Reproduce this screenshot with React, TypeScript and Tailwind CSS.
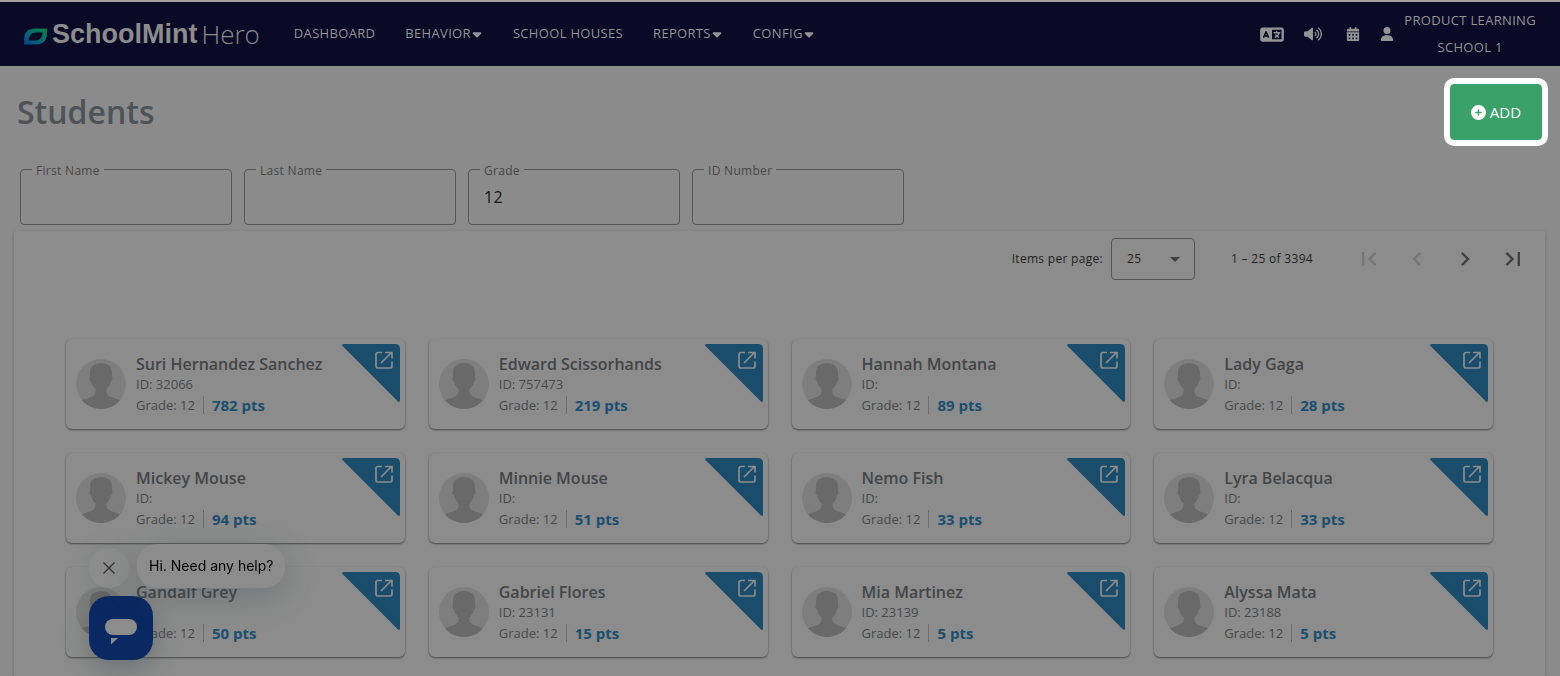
import React, { useState } from "react";
import {
  FaCalendarDays,
  FaCaretDown,
  FaCirclePlus,
  FaLanguage,
  FaUser,
  FaVolumeHigh,
} from "react-icons/fa6";
import { MdArrowDropDown, MdChevronLeft, MdChevronRight, MdFirstPage, MdLastPage } from "react-icons/md";

type Student = { name: string; id: string; grade: number; points: number };

const students: Student[] = [
  { name: "Suri Hernandez Sanchez", id: "32066", grade: 12, points: 782 },
  { name: "Edward Scissorhands", id: "757473", grade: 12, points: 219 },
  { name: "Hannah Montana", id: "", grade: 12, points: 89 },
  { name: "Lady Gaga", id: "", grade: 12, points: 28 },
  { name: "Mickey Mouse", id: "", grade: 12, points: 94 },
  { name: "Minnie Mouse", id: "", grade: 12, points: 51 },
  { name: "Nemo Fish", id: "", grade: 12, points: 33 },
  { name: "Lyra Belacqua", id: "", grade: 12, points: 33 },
  { name: "Gandalf Grey", id: "", grade: 12, points: 50 },
  { name: "Gabriel Flores", id: "23131", grade: 12, points: 15 },
  { name: "Mia Martinez", id: "23139", grade: 12, points: 5 },
  { name: "Alyssa Mata", id: "23188", grade: 12, points: 5 },
];

const navItems = [
  { label: "DASHBOARD", menu: false },
  { label: "BEHAVIOR", menu: true },
  { label: "SCHOOL HOUSES", menu: false },
  { label: "REPORTS", menu: true },
  { label: "CONFIG", menu: true },
];

const Logo = () => (
  <a href="#" className="flex items-center tracking-normal text-[#8c8c8c]">
    <svg width="24" height="17" viewBox="0 0 24 17" className="mr-1 mt-1">
      <defs>
        <linearGradient id="leaf" x1="0" y1="1" x2="1" y2="0">
          <stop offset="0" stopColor="#06418a" />
          <stop offset="0.5" stopColor="#05696f" />
          <stop offset="1" stopColor="#07803f" />
        </linearGradient>
      </defs>
      <path
        fill="url(#leaf)"
        fillRule="evenodd"
        d="M0 16.500V11C0 4.500 4.500 0.500 10.500 0.500H23V6C23 12.500 18.500 16.500 12.500 16.500ZM4.500 12.500H11.500C16 12.500 18 9.500 18.500 4.500H12C7.500 4.500 5 7.500 4.500 12.500Z"
      />
    </svg>
    <span className="font-['Liberation_Sans',sans-serif] text-[27px] font-bold leading-8">SchoolMint</span>
    <span className="ml-1 text-[26px] font-light leading-8">Hero</span>
  </a>
);

const Header = () => (
  <header className="flex min-h-[66px] items-center border-t-2 border-[#a5a19d] bg-[#0a0926] px-6 text-[13px] font-medium tracking-wide text-[#949494]">
    <Logo />
    <nav className="ml-[34px] flex flex-1 items-center gap-[30px]">
      {navItems.map((item) => (
        <a key={item.label} href="#" className="flex items-center">
          {item.label}
          {item.menu && <FaCaretDown className="h-[14px] w-3" />}
        </a>
      ))}
    </nav>
    <div className="flex items-center">
      <button aria-label="Language" className="mr-5"><FaLanguage className="h-[19px] w-6" /></button>
      <button aria-label="Announcements" className="mr-6"><FaVolumeHigh className="h-4 w-[18px]" /></button>
      <button aria-label="Calendar" className="mr-5"><FaCalendarDays className="h-[14px] w-[14px]" /></button>
      <a href="#" className="flex items-center gap-[10px]">
        <FaUser className="h-[14px] w-[14px]" />
        <span className="text-center leading-[27px]">
          PRODUCT LEARNING
          <br />
          SCHOOL 1
        </span>
      </a>
    </div>
  </header>
);

const FilterField = ({ id, label, initial = "" }: { id: string; label: string; initial?: string }) => {
  const [value, setValue] = useState(initial);
  return (
    <div className="relative w-[212px]">
      <input
        id={id}
        type="text"
        value={value}
        onChange={(e) => setValue(e.target.value)}
        className="h-14 w-full rounded border border-[#555] bg-transparent px-[15px] text-base tracking-wide text-[#141414] outline-none"
      />
      <label htmlFor={id} className="absolute -top-2 left-3 bg-[#8b8b8b] px-1 text-xs leading-5 tracking-wide text-[#474747]">
        {label}
      </label>
    </div>
  );
};

const Paginator = () => {
  const [pageSize, setPageSize] = useState("25");
  return (
    <div className="flex h-14 items-center justify-end pr-[18px] text-xs tracking-wide text-[#1f1f1f]">
      <label htmlFor="page-size">Items per page:</label>
      <div className="relative ml-2">
        <select
          id="page-size"
          value={pageSize}
          onChange={(e) => setPageSize(e.target.value)}
          className="h-[42px] w-[84px] appearance-none rounded border border-[#555] bg-transparent px-[15px] tracking-wide outline-none"
        >
          <option>25</option>
          <option>50</option>
          <option>100</option>
        </select>
        <MdArrowDropDown size={24} className="pointer-events-none absolute right-2 top-[9px] text-[#404040]" />
      </div>
      <span className="ml-9 mr-[42px]">1 – 25 of 3394</span>
      <div className="flex items-center gap-5 text-[#404040]">
        <button aria-label="First page" disabled className="text-[#757575]"><MdFirstPage size={28} /></button>
        <button aria-label="Previous page" disabled className="text-[#757575]"><MdChevronLeft size={28} /></button>
        <button aria-label="Next page"><MdChevronRight size={28} /></button>
        <button aria-label="Last page"><MdLastPage size={28} /></button>
      </div>
    </div>
  );
};

const Avatar = () => (
  <svg width="50" height="50" viewBox="0 0 50 50" className="shrink-0 rounded-full">
    <rect width="50" height="50" fill="#7e7e7e" />
    <path
      fill="#696969"
      d="M25 4C31.500 4 36 7.500 36 13.500V18C37 19 36.500 22 35 22.500C34.500 26 32 28.500 30.500 30.500C29.500 34.500 32 37 36 38.500C39.500 39.500 42 40 45 42V50H5V42C8 40 10.500 39.500 14 38.500C18 37 20.500 34.500 19.500 30.500C18 28.500 15.500 26 15 22.500C13.500 22 13 19 14 18V13.500C14 7.500 18.500 4 25 4Z"
    />
  </svg>
);

const StudentCard = ({ student }: { student: Student }) => (
  <article className="relative flex h-[90px] items-center rounded-md bg-[#8c8c8c] pl-[10px] text-[#46484a] shadow-[0_1px_2px_rgba(0,0,0,0.5)]">
    <Avatar />
    <div className="ml-[10px] pt-[2px] text-[13px]">
      <h2 className="text-base font-semibold leading-5 text-[#434547]">{student.name}</h2>
      <p className="leading-5">ID: {student.id}</p>
      <p className="flex items-center leading-[22px]">
        Grade: {student.grade}
        <span className="mx-2 h-[18px] w-px bg-[#6c6c6c]" />
        <strong className="text-[15px] font-bold leading-[22px] text-[#1a4f70]">{student.points} pts</strong>
      </p>
    </div>
    <a href="#" aria-label={`Open ${student.name}`} className="absolute right-[5px] top-[5px]">
      <svg width="58" height="58" viewBox="0 0 58 58">
        <path fill="#194d6b" d="M1.500 0H53Q58 0 58 5V56.500Q57.500 59 55.500 57L0.500 2Q-0.500 0 1.500 0Z" />
        <path
          fill="none"
          stroke="#8c8c8c"
          strokeWidth="1.700"
          d="M40 8.500H36Q34 8.500 34 10.500V22Q34 24 36 24H48Q50 24 50 22V17.500M39 19L49.500 8.500M43 8.500H50V14.500"
        />
      </svg>
    </a>
  </article>
);

const ChatWidget = () => (
  <aside className="fixed bottom-4 left-[89px] font-['Inter',sans-serif]">
    <div className="mb-2 flex items-end gap-2">
      <button
        aria-label="Close chat"
        className="flex h-10 w-10 items-center justify-center rounded-full bg-[#8c8c8c] shadow-[0_4px_24px_rgba(60,75,75,0.2)]"
      >
        <svg width="12" height="12" viewBox="0 0 12 12" stroke="#303030" strokeWidth="1.200">
          <path d="M0.500 0.500L11.500 11.500M11.500 0.500L0.500 11.500" />
        </svg>
      </button>
      <p className="flex h-11 items-center rounded-[20px] bg-[#8c8c8c] px-3 text-sm text-black shadow-[0_8px_32px_rgba(50,70,70,0.3)]">
        Hi. Need any help?
      </p>
    </div>
    <button
      aria-label="Open chat"
      className="flex h-16 w-16 items-center justify-center rounded-[20px] bg-[#0a2963] pt-2 shadow-[0_8px_24px_rgba(50,70,70,0.35)]"
    >
      <svg width="32" height="26" viewBox="0 0 32 26" fill="#8c8c8c">
        <rect width="32" height="16" rx="8" />
        <path d="M6 19H13L6 25.500Z" />
      </svg>
    </button>
  </aside>
);

const App = () => {
  return (
    <div className="flex min-h-screen flex-col overflow-hidden bg-[#8b8b8b] font-['Open_Sans',sans-serif]">
      <Header />
      <main className="flex flex-1 flex-col">
        <div className="flex items-center justify-between pb-[29px] pl-[17px] pr-[18px] pt-[18px]">
          <h1 className="text-[32px] font-semibold leading-10 text-[#4d5359]">Students</h1>
          <button className="flex h-14 w-[92px] items-center justify-center gap-1 rounded bg-[#3aa168] text-[15px] font-medium text-white shadow-[0_0_0_3px_#fff] outline-[6px] outline-white">
            <FaCirclePlus size={15} />
            ADD
          </button>
        </div>

        <form className="flex flex-wrap gap-3 px-5 pb-[6px]">
          <FilterField id="first-name" label="First Name" />
          <FilterField id="last-name" label="Last Name" />
          <FilterField id="grade" label="Grade" initial="12" />
          <FilterField id="id-number" label="ID Number" />
        </form>

        <section className="ml-[14px] mr-[15px] flex-1 bg-[#8c8c8c] shadow-[0_1px_4px_rgba(0,0,0,0.22)]">
          <Paginator />
          <div className="grid grid-cols-4 gap-6 px-[52px] pb-4 pt-[52px]">
            {students.map((student) => (
              <StudentCard key={student.name} student={student} />
            ))}
          </div>
        </section>
      </main>
      <ChatWidget />
    </div>
  );
};

export default App;
